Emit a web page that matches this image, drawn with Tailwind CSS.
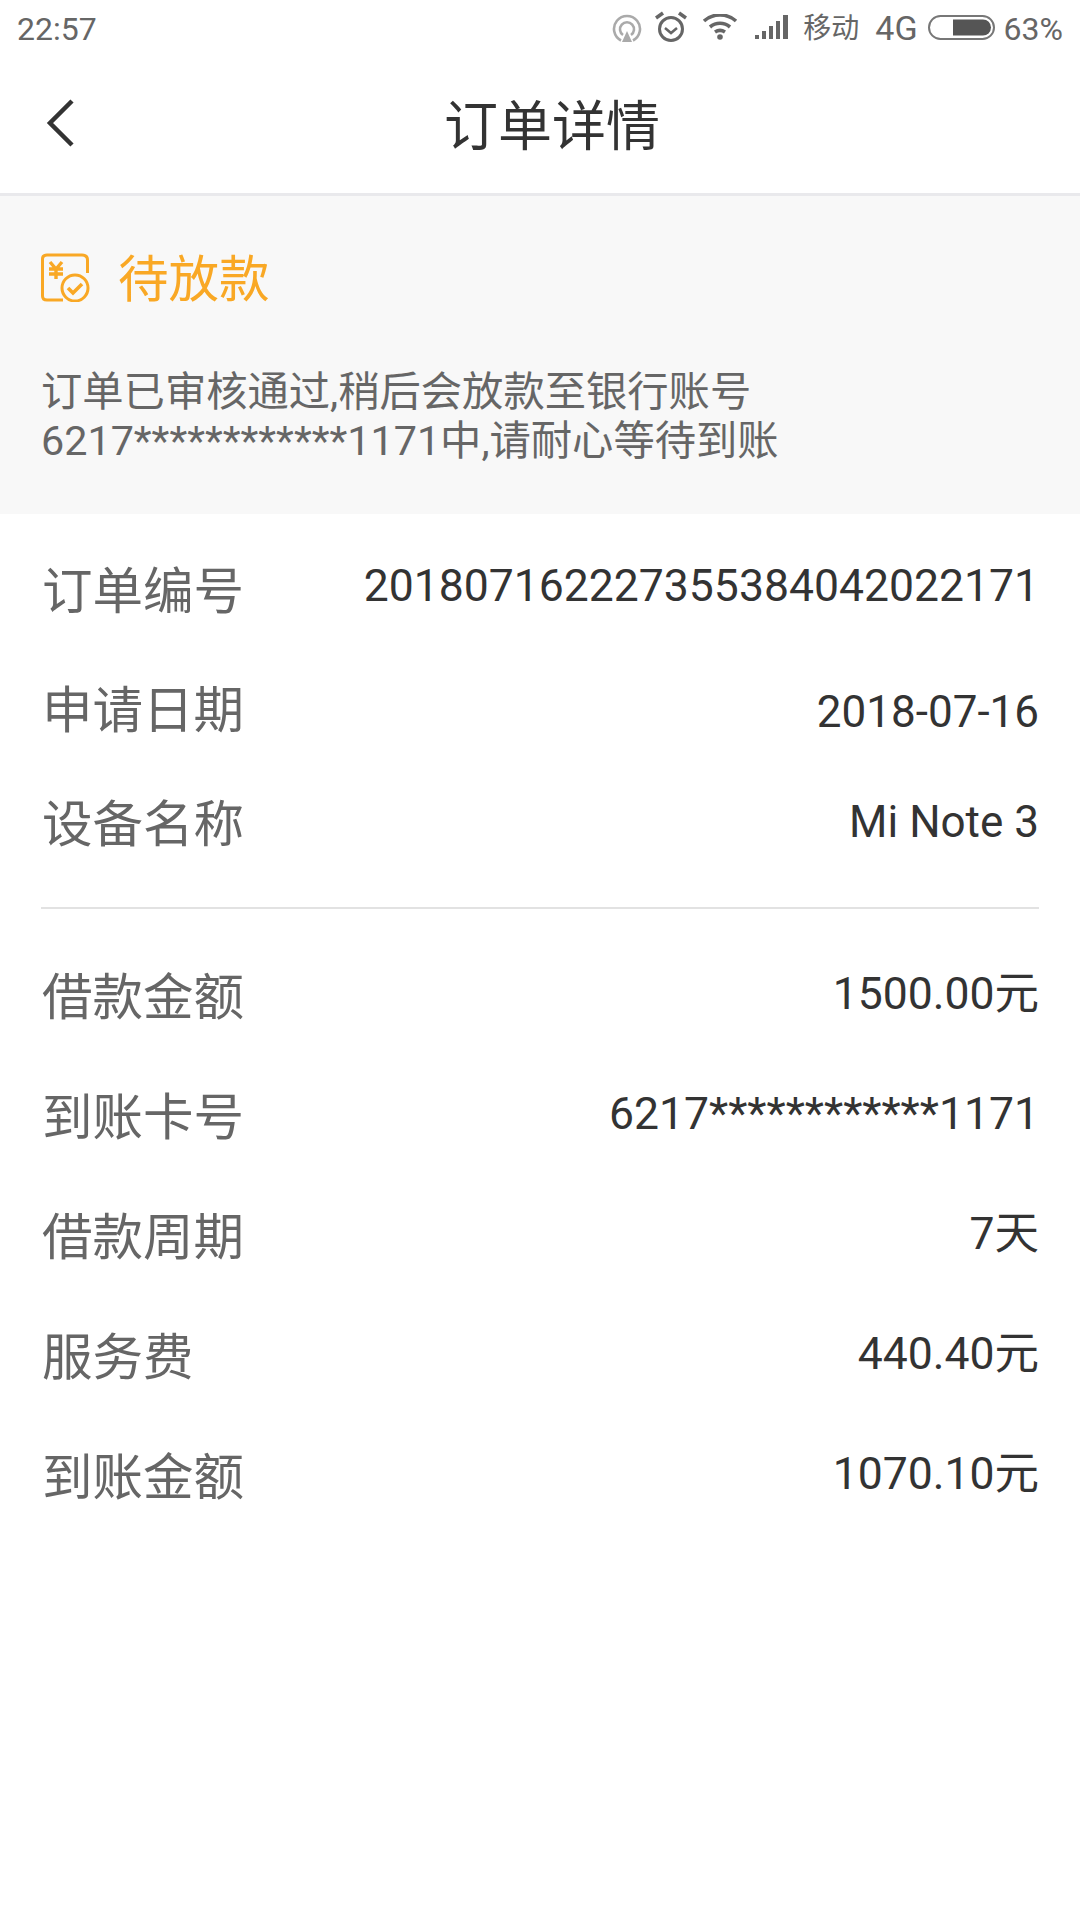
<!doctype html>
<html>
<head>
  <meta charset="UTF-8">
  <meta name="viewport" content="width=device-width, initial-scale=1.0">
  <script src="https://cdn.jsdelivr.net/npm/@tailwindcss/browser@4"></script>
  <title>订单详情</title>
</head>
<body class="bg-white w-[1080px] h-[1920px] overflow-hidden font-['Roboto','Noto_Sans_CJK_SC',sans-serif]">
  <!-- status bar -->
  <div class="h-[56px] flex items-center justify-between pl-[17px] pr-[17px] pt-[1px] text-[#666] text-[32px]">
    <span>22:57</span>
    <div class="flex items-center">
      <svg class="w-[30px] h-[30px]" viewBox="0 0 30 30" fill="none" stroke="#aaa" stroke-width="2.6">
        <path d="M9 26.500A13 13 0 1 1 21 26.500"/>
        <path d="M11 21A7 7 0 1 1 19 21"/>
        <path d="M15 17L20 28H10Z" fill="#aaa" stroke="none"/>
      </svg>
      <svg class="w-[32px] h-[32px] ml-[13px] -mt-[3px]" viewBox="0 0 32 32" fill="none" stroke="#666" stroke-width="3">
        <circle cx="16" cy="18" r="11.500"/>
        <path d="M10 17l6 5 6-5" stroke-width="2.500"/>
        <path d="M1 7l7-5M31 7l-7-5" stroke-width="3.500"/>
      </svg>
      <svg class="w-[36px] h-[26px] ml-[15px] -mt-[3px]" viewBox="0 0 36 26" fill="none" stroke="#666" stroke-width="3.600">
        <path d="M2 7C11-1 25-1 34 7"/>
        <path d="M8 13C14 8 22 8 28 13"/>
        <path d="M13 18C16 16 20 16 23 18"/>
        <circle cx="18" cy="23" r="2.800" fill="#666" stroke="none"/>
      </svg>
      <svg class="w-[34px] h-[24px] ml-[17px] -mt-[3px]" viewBox="0 0 34 24" fill="#666">
        <rect x="0" y="20" width="4" height="4"/>
        <rect x="7" y="16" width="4" height="8"/>
        <rect x="14" y="11" width="4" height="13"/>
        <rect x="21" y="6" width="4" height="18"/>
        <rect x="28" y="0" width="5" height="24"/>
      </svg>
      <span class="ml-[14px] text-[28px]">移动</span>
      <span class="ml-[16px] text-[34px]">4G</span>
      <svg class="w-[67px] h-[25px] ml-[10px] -mt-[3px]" viewBox="0 0 67 25" fill="none">
        <rect x="1" y="1" width="65" height="23" rx="11.500" stroke="#777" stroke-width="2"/>
        <path d="M25 4.500H55A8 8 0 0 1 55 20.500H25Z" fill="#555"/>
      </svg>
      <span class="ml-[9px]">63%</span>
    </div>
  </div>

  <!-- nav -->
  <div class="h-[140px] border-b-[3px] border-[#e9e9ec] flex items-center justify-center relative pb-[2px]">
    <svg class="absolute left-[45px] top-[42px] w-[30px] h-[50px]" viewBox="0 0 30 50" fill="none" stroke="#333" stroke-width="4.500">
      <path d="M27 3L5 25L27 47"/>
    </svg>
    <h1 class="text-[#333] text-[54px] leading-none pl-[24px] pt-[8px]">订单详情</h1>
  </div>

  <!-- status panel -->
  <div class="h-[318px] bg-[#f8f8f8] px-[41px] pt-[54px]">
    <div class="flex items-center h-[60px]">
      <svg class="w-[49px] h-[49px] -mt-[5px]" viewBox="0 0 49 49" fill="none" stroke="#f9a825" stroke-width="3">
        <path d="M22 47H6Q1.500 47 1.500 43V6Q1.500 2 6 2H41Q46.500 2 46.500 7V20"/>
        <circle cx="34" cy="35" r="13"/>
        <path d="M27 35l5 5 9-9" stroke-width="3.600"/>
        <path d="M9 9l6 7 6-7M8 16h14M8 21h14M15 16v10" stroke-width="3.400"/>
      </svg>
      <span class="ml-[28px] text-[50.500px] text-[#f9a825] leading-none">待放款</span>
    </div>
    <p class="mt-[58px] text-[41.300px] leading-[49px] text-[#666]">订单已审核通过,稍后会放款至银行账号<br>6217************1171中,请耐心等待到账</p>
  </div>

  <!-- details -->
  <div class="pl-[42px] pr-[41px] pt-[17px]">
    <div class="h-[119px] flex items-center justify-between">
      <span class="text-[50.500px] text-[#666] pt-[2px]">订单编号</span>
      <span class="text-[44.500px] text-[#333] pb-[8px]">201807162227355384042022171</span>
    </div>
    <div class="h-[119px] flex items-center justify-between">
      <span class="text-[50.500px] text-[#666] pt-[2px]">申请日期</span>
      <span class="text-[44px] text-[#333] pt-[4px]">2018-07-16</span>
    </div>
    <div class="h-[110px] flex items-center justify-between">
      <span class="text-[50.500px] text-[#666] pt-[2px]">设备名称</span>
      <span class="text-[44px] text-[#333] pb-[4px]">Mi Note 3</span>
    </div>
    <div class="mt-[28px] -ml-px border-t-2 border-[#e2e2e2]"></div>
    <div class="mt-[28px]">
      <div class="h-[120px] flex items-center justify-between">
        <span class="text-[50.500px] text-[#666] pt-[2px]">借款金额</span>
        <span class="text-[44.500px] text-[#333] pb-[6px]">1500.00元</span>
      </div>
      <div class="h-[120px] flex items-center justify-between">
        <span class="text-[50.500px] text-[#666] pt-[2px]">到账卡号</span>
        <span class="text-[44.500px] text-[#333] pb-[6px]">6217************1171</span>
      </div>
      <div class="h-[120px] flex items-center justify-between">
        <span class="text-[50.500px] text-[#666] pt-[2px]">借款周期</span>
        <span class="text-[44.500px] text-[#333] pb-[6px]">7天</span>
      </div>
      <div class="h-[120px] flex items-center justify-between">
        <span class="text-[50.500px] text-[#666] pt-[2px]">服务费</span>
        <span class="text-[44.500px] text-[#333] pb-[6px]">440.40元</span>
      </div>
      <div class="h-[120px] flex items-center justify-between">
        <span class="text-[50.500px] text-[#666] pt-[2px]">到账金额</span>
        <span class="text-[44.500px] text-[#333] pb-[6px]">1070.10元</span>
      </div>
    </div>
  </div>
</body>
</html>
